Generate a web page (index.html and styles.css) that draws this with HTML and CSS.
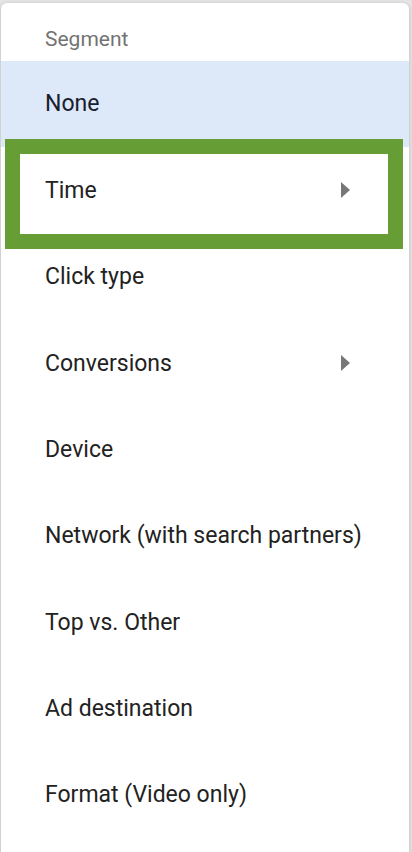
FILE: index.html
```html
<!DOCTYPE html>
<html>
<head>
<meta charset="utf-8">
<link rel="stylesheet" href="styles.css">
</head>
<body>
<div class="menu">
  <div class="menu-header">Segment</div>
  <div class="item selected">None</div>
  <div class="item">Time<span class="arrow"></span></div>
  <div class="item">Click type</div>
  <div class="item">Conversions<span class="arrow"></span></div>
  <div class="item">Device</div>
  <div class="item">Network (with search partners)</div>
  <div class="item">Top vs. Other</div>
  <div class="item">Ad destination</div>
  <div class="item">Format (Video only)</div>
  <div class="highlight-box"></div>
</div>
</body>
</html>
```
FILE: styles.css
```css
html, body {
  margin: 0;
  padding: 0;
  background: #e4e4e4;
  height: 852px;
  overflow: hidden;
}
body {
  font-family: Roboto, "Noto Sans", sans-serif;
  padding: 3px 3px 0 1px;
}
.menu {
  position: relative;
  background: #fff;
  border-radius: 6px 6px 0 0;
  box-shadow: 0 1px 4px rgba(0,0,0,0.2);
  height: 860px;
}
.menu-header {
  height: 57.8px;
  box-sizing: border-box;
  padding: 14px 0 0 44px;
  display: flex;
  align-items: center;
  font-size: 21px;
  color: #737373;
}
.item {
  height: 86.375px;
  display: flex;
  align-items: center;
  padding: 0 0 0 44px;
  font-size: 23px;
  color: #222;
  position: relative;
}
.item.selected {
  background: #dde8f8;
  color: #17202e;
}
.arrow {
  position: absolute;
  left: 340px;
  top: 50%;
  margin-top: -8px;
  width: 0;
  height: 0;
  border-top: 8px solid transparent;
  border-bottom: 8px solid transparent;
  border-left: 9px solid #777;
}
.highlight-box {
  position: absolute;
  left: 4px;
  top: 136px;
  width: 398px;
  height: 110px;
  box-sizing: border-box;
  border: 15px solid #669d35;
}
```
